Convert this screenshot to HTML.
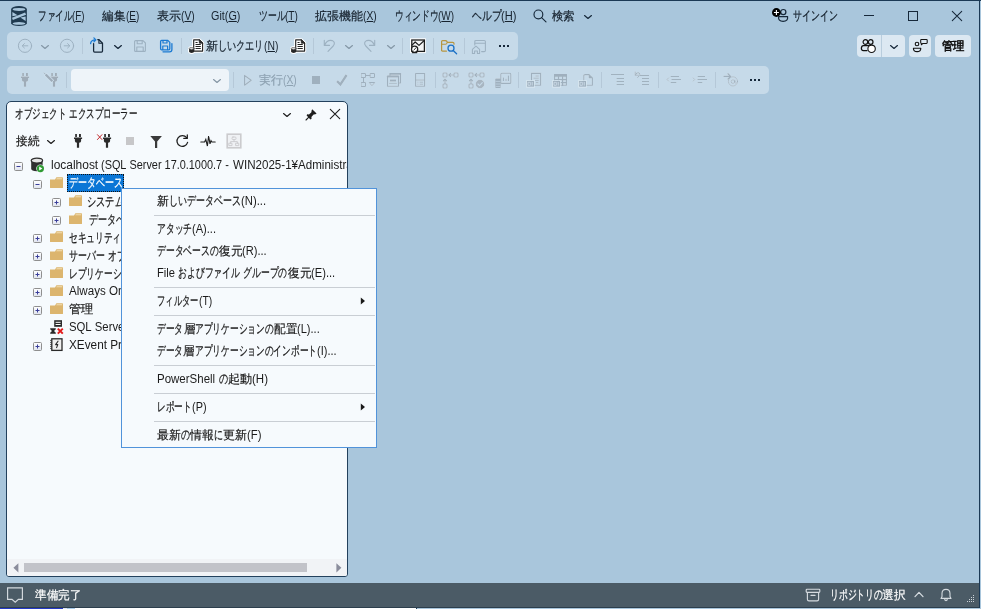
<!DOCTYPE html>
<html lang="ja"><head><meta charset="utf-8"><title>SSMS</title>
<style>
html,body{margin:0;padding:0;}
body{width:981px;height:609px;overflow:hidden;background:#A9C6DC;font-family:"Liberation Sans",sans-serif;font-size:12px;color:#1B1B1B;position:relative;}
#app{position:absolute;left:0;top:0;width:981px;height:609px;overflow:hidden;will-change:transform;}
#app div,#app svg,#app span.t{position:absolute;}
</style></head><body><div id="app">
<div style="left:7px;top:32px;width:511px;height:28px;background:#C6DAE9;border-radius:5px;"></div>
<div style="left:7px;top:66px;width:762px;height:28px;background:#C6DAE9;border-radius:5px;"></div>
<div style="left:857px;top:35px;width:48px;height:22px;background:#DCE8F2;border-radius:4px;"></div>
<div style="left:881px;top:35px;width:1px;height:22px;background:#B9CDDD;"></div>
<div style="left:909px;top:35px;width:22px;height:22px;background:#DCE8F2;border-radius:4px;"></div>
<div style="left:935px;top:35px;width:36px;height:22px;background:#DCE8F2;border-radius:4px;"></div>
<div style="left:71px;top:69px;width:158px;height:22px;background:#EEF4F9;border-radius:4px;"></div>
<div style="left:6px;top:101px;width:342px;height:476px;background:#F6FAFD;box-sizing:border-box;border:1px solid #23415D;border-radius:5px 5px 3px 3px;"></div>
<div style="left:7px;top:559px;width:340px;height:17px;background:#F1F3F6;border-radius:0 0 2px 2px;"></div>
<div style="left:24px;top:563px;width:283px;height:9px;background:#C2C3C9;"></div>
<div style="left:0px;top:583px;width:979px;height:24px;background:#4B5B66;"></div>
<div style="left:0px;top:607px;width:980px;height:1px;background:#2C3E4C;"></div>
<div style="left:0px;top:608px;width:63px;height:1px;background:#2438C8;"></div>
<div style="left:63px;top:608px;width:4px;height:1px;background:#DDE6F5;"></div>
<div style="left:68px;top:608px;width:7px;height:1px;background:#A8CBEA;"></div>
<div style="left:75px;top:608px;width:341px;height:1px;background:#FFFFFF;"></div>
<div style="left:416px;top:608px;width:1px;height:1px;background:#1B3955;"></div>
<div style="left:0px;top:0px;width:981px;height:1px;background:#1B3955;"></div>
<div style="left:979px;top:0px;width:1px;height:608px;background:#1B3955;"></div>
<svg style="left:11px;top:6px;" width="16" height="20" viewBox="0 0 16 20" fill="none" stroke-linecap="round" stroke-linejoin="round">
<path d="M0.15 3.2 A7.85 3.1 0 0 1 15.85 3.2 V17.2 A7.85 2.75 0 0 1 0.15 17.2 Z" fill="#1F3A50"/>
<ellipse cx="8" cy="3.45" rx="6.4" ry="1.55" fill="#A9C6DC"/>
<ellipse cx="8" cy="17.45" rx="6.4" ry="1.35" fill="#A9C6DC"/>
<path d="M1.4 5.9 V10.3 L6.6 9.3 Z" fill="#A9C6DC"/>
<path d="M14.6 10.5 V14.9 L9.4 11.5 Z" fill="#A9C6DC"/>
<path d="M1.4 12.9 L14.6 7.7" stroke="#A9C6DC" stroke-width="2.5" stroke-linecap="butt"/></svg>
<svg style="left:532px;top:8px;" width="16" height="16" viewBox="0 0 16 16" fill="none" stroke-linecap="round" stroke-linejoin="round"><circle cx="6.4" cy="6.4" r="4.4" stroke="#16283A" stroke-width="1.15"/><path d="M9.6 9.6 L14 13.8" stroke="#16283A" stroke-width="1.15"/></svg>
<svg style="left:583px;top:13.9px;" width="10" height="7.2" viewBox="0 0 10 7.2" fill="none" stroke-linecap="round" stroke-linejoin="round"><path d="M1.54 1.54 L5.00 4.46 L8.46 1.54" stroke="#16283A" stroke-width="1.2"/></svg>
<svg style="left:770px;top:6px;" width="22" height="18" viewBox="0 0 22 18" fill="none" stroke-linecap="round" stroke-linejoin="round">
<circle cx="13.3" cy="6.1" r="2.6" stroke="#16283A" stroke-width="1.2"/>
<path d="M8.6 10.6 H17.6 Q18.2 15.4 13.1 15.4 Q8 15.4 8.6 10.6 Z" stroke="#16283A" stroke-width="1.2"/>
<circle cx="6.4" cy="6.5" r="4.4" fill="#000"/>
<path d="M6.4 4 V9 M3.9 6.5 H8.9" stroke="#fff" stroke-width="1.1" stroke-linecap="butt"/></svg>
<div style="left:864px;top:15px;width:10px;height:1px;background:#16283A"></div>
<div style="left:908px;top:11px;width:10px;height:10px;box-sizing:border-box;border:1px solid #16283A"></div>
<svg style="left:951px;top:10px;" width="12" height="12" viewBox="0 0 12 12" fill="none" stroke-linecap="round" stroke-linejoin="round"><path d="M1.3 1.3 L10.7 10.7 M10.7 1.3 L1.3 10.7" stroke="#16283A" stroke-width="1.05"/></svg>
<svg style="left:17px;top:38px;" width="16" height="16" viewBox="0 0 16 16" fill="none" stroke-linecap="round" stroke-linejoin="round"><circle cx="8" cy="7.8" r="6.6" stroke="#9DB1C1" stroke-width="1"/><path d="M10.8 7.8 H5.4 M7.4 5.6 L5.2 7.8 L7.4 10" stroke="#9DB1C1" stroke-width="0.95"/></svg>
<svg style="left:40px;top:43.8px;" width="10" height="7.2" viewBox="0 0 10 7.2" fill="none" stroke-linecap="round" stroke-linejoin="round"><path d="M1.54 1.54 L5.00 4.46 L8.46 1.54" stroke="#8497A6" stroke-width="1.2"/></svg>
<svg style="left:59px;top:38px;" width="16" height="16" viewBox="0 0 16 16" fill="none" stroke-linecap="round" stroke-linejoin="round"><circle cx="8" cy="7.8" r="6.6" stroke="#9DB1C1" stroke-width="1"/><path d="M5.2 7.8 H10.6 M8.6 5.6 L10.8 7.8 L8.6 10" stroke="#9DB1C1" stroke-width="0.95"/></svg>
<div style="left:82px;top:38px;width:1px;height:16px;background:#B5C8D8"></div>
<svg style="left:89px;top:36px;" width="16" height="18" viewBox="0 0 16 18" fill="none" stroke-linecap="round" stroke-linejoin="round">
<path d="M4.6 7.5 V15 Q4.6 16 5.6 16 H12.5 Q13.5 16 13.5 15 V7.2 L10 3.7 H8.8" stroke="#16283A" stroke-width="1.25"/>
<path d="M9.9 3.9 V7.3 H13.3" stroke="#16283A" stroke-width="1.1"/>
<path d="M1.6 7.6 Q1.8 4 6.6 3.9 M4.9 1.9 L6.9 3.9 L4.9 5.9" stroke="#1C7CD5" stroke-width="1.3"/></svg>
<svg style="left:113px;top:43.6px;" width="10" height="7.2" viewBox="0 0 10 7.2" fill="none" stroke-linecap="round" stroke-linejoin="round"><path d="M1.58 1.58 L5.00 4.39 L8.41 1.58" stroke="#16283A" stroke-width="1.3"/></svg>
<svg style="left:133px;top:39px;" width="14" height="14" viewBox="0 0 14 14" fill="none" stroke-linecap="round" stroke-linejoin="round">
<path d="M1.6 2.6 Q1.6 1.6 2.6 1.6 H10 L12.4 4 V11.4 Q12.4 12.4 11.4 12.4 H2.6 Q1.6 12.4 1.6 11.4 Z" stroke="#9DB1C1" stroke-width="1.1"/>
<path d="M4.2 1.8 V4.8 H9.2 V1.8 M3.8 12.2 V8 H10.2 V12.2" stroke="#9DB1C1" stroke-width="1.1"/></svg>
<svg style="left:159px;top:39px;" width="15" height="14" viewBox="0 0 15 14" fill="none" stroke-linecap="round" stroke-linejoin="round">
<path d="M1.6 2.4 Q1.6 1.4 2.6 1.4 H8.8 L10.8 3.4 V9.8 Q10.8 10.8 9.8 10.8 H2.6 Q1.6 10.8 1.6 9.8 Z" stroke="#1B7AD2" stroke-width="1.3"/>
<path d="M4 1.6 V4 H8 V1.6 M3.8 10.6 V7 H8.6 V10.6" stroke="#1B7AD2" stroke-width="1.2"/>
<path d="M12.9 4.6 V10.6 Q12.9 12.8 10.6 12.8 H4" stroke="#1B7AD2" stroke-width="1.3"/></svg>
<div style="left:181px;top:38px;width:1px;height:16px;background:#B5C8D8"></div>
<svg style="left:188px;top:38px;" width="17" height="16" viewBox="0 0 17 16" fill="none" stroke-linecap="round" stroke-linejoin="round">
<path d="M5.7 1.9 H11.3 L14.6 5.2 V13.1 H5.7 Z" stroke="#fff" stroke-width="3.2" fill="#fff"/>
<ellipse cx="3.6" cy="12" rx="2.7" ry="3" fill="#fff" stroke="#fff" stroke-width="2"/>
<path d="M5.7 1.9 H11.3 L14.6 5.2 V13.1 H5.7 Z" stroke="#262626" stroke-width="1.15" fill="#fff"/>
<path d="M11.3 1.9 V5.2 H14.6 Z" fill="#262626" stroke="#262626" stroke-width="0.8"/>
<path d="M7.5 4.5 H9.6 M7.5 6.5 H12.8 M7.5 8.5 H12.8 M7.5 10.5 H12.8" stroke="#262626" stroke-width="1" stroke-linecap="butt"/>
<path d="M1.1 10.6 V13.6 Q1.1 14.9 3.6 14.9 Q6.1 14.9 6.1 13.6 V10.6 Z" fill="#262626"/>
<ellipse cx="3.6" cy="10.6" rx="2.5" ry="1.1" fill="#D8D8D8" stroke="#262626" stroke-width="0.5"/></svg>
<svg style="left:290px;top:38px;" width="17" height="16" viewBox="0 0 17 16" fill="none" stroke-linecap="round" stroke-linejoin="round">
<path d="M5.7 1.9 H11.3 L14.6 5.2 V13.1 H5.7 Z" stroke="#fff" stroke-width="3.2" fill="#fff"/>
<ellipse cx="3.6" cy="12" rx="2.7" ry="3" fill="#fff" stroke="#fff" stroke-width="2"/>
<path d="M5.7 1.9 H11.3 L14.6 5.2 V13.1 H5.7 Z" stroke="#262626" stroke-width="1.15" fill="#fff"/>
<path d="M11.3 1.9 V5.2 H14.6 Z" fill="#262626" stroke="#262626" stroke-width="0.8"/>
<path d="M7.5 4.5 H9.6 M7.5 6.5 H12.8 M7.5 8.5 H12.8 M7.5 10.5 H12.8" stroke="#262626" stroke-width="1" stroke-linecap="butt"/>
<path d="M1.1 10.6 V13.6 Q1.1 14.9 3.6 14.9 Q6.1 14.9 6.1 13.6 V10.6 Z" fill="#262626"/>
<ellipse cx="3.6" cy="10.6" rx="2.5" ry="1.1" fill="#D8D8D8" stroke="#262626" stroke-width="0.5"/></svg>
<div style="left:313px;top:38px;width:1px;height:16px;background:#B5C8D8"></div>
<svg style="left:322px;top:38px;" width="14" height="15" viewBox="0 0 14 15" fill="none" stroke-linecap="round" stroke-linejoin="round"><path d="M2.3 2.2 V7.4 H7.5 M2.6 7.1 Q5.4 1.2 10.2 2.6 Q14 4.4 11.2 8 L6 13.4" stroke="#9DB1C1" stroke-width="1.1"/></svg>
<svg style="left:344px;top:43.6px;" width="10" height="7.2" viewBox="0 0 10 7.2" fill="none" stroke-linecap="round" stroke-linejoin="round"><path d="M1.54 1.54 L5.00 4.46 L8.46 1.54" stroke="#8497A6" stroke-width="1.2"/></svg>
<svg style="left:363px;top:38px;" width="14" height="15" viewBox="0 0 14 15" fill="none" stroke-linecap="round" stroke-linejoin="round"><path d="M11.7 2.2 V7.4 H6.5 M11.4 7.1 Q8.6 1.2 3.8 2.6 Q0 4.4 2.8 8 L8 13.4" stroke="#9DB1C1" stroke-width="1.1"/></svg>
<svg style="left:386px;top:43.6px;" width="10" height="7.2" viewBox="0 0 10 7.2" fill="none" stroke-linecap="round" stroke-linejoin="round"><path d="M1.54 1.54 L5.00 4.46 L8.46 1.54" stroke="#8497A6" stroke-width="1.2"/></svg>
<div style="left:402px;top:38px;width:1px;height:16px;background:#B5C8D8"></div>
<svg style="left:410px;top:38px;" width="16" height="16" viewBox="0 0 16 16" fill="none" stroke-linecap="round" stroke-linejoin="round">
<rect x="0" y="0.3" width="15.8" height="14.8" fill="#fff"/>
<rect x="1.8" y="2" width="12.6" height="11.4" stroke="#1E1E1E" stroke-width="1.3" fill="#F4F4F4" stroke-linejoin="miter"/>
<path d="M2 7.2 L5.2 4 L9 7.4 L14 2.8" stroke="#1E1E1E" stroke-width="1.2"/>
<circle cx="4.6" cy="11.2" r="3.1" fill="#fff" stroke="#1E1E1E" stroke-width="1.3"/>
<path d="M3.9 11.9 L5.6 10.2" stroke="#1E1E1E" stroke-width="1"/>
<path d="M2.4 14.6 H6.8" stroke="#1E1E1E" stroke-width="1.2"/></svg>
<div style="left:433px;top:38px;width:1px;height:16px;background:#B5C8D8"></div>
<svg style="left:440px;top:39px;" width="18" height="16" viewBox="0 0 18 16" fill="none" stroke-linecap="round" stroke-linejoin="round">
<path d="M6.4 12.2 H2.6 Q1.6 12.2 1.6 11.2 V2.6 Q1.6 1.6 2.6 1.6 H5.4 Q6.4 1.6 7 2.6 L7.4 3.4 H12.8 Q14 3.4 14 4.6 V5.2" stroke="#B7953F" stroke-width="1.2"/>
<path d="M1.8 5.2 H5.6 Q6.6 5.2 7.2 3.6" stroke="#B7953F" stroke-width="1.1"/>
<circle cx="11" cy="9.2" r="3" stroke="#1B70C6" stroke-width="1.3"/>
<path d="M13.2 11.5 L16.6 14.7" stroke="#1B70C6" stroke-width="1.3"/></svg>
<div style="left:464px;top:38px;width:1px;height:16px;background:#B5C8D8"></div>
<svg style="left:471px;top:39px;" width="16" height="16" viewBox="0 0 16 16" fill="none" stroke-linecap="round" stroke-linejoin="round">
<path d="M3.8 6 V2.6 Q3.8 1.4 5 1.4 H13.2 Q14.4 1.4 14.4 2.6 V11.4 Q14.4 12.6 13.2 12.6 H10.6" stroke="#9DB1C1" stroke-width="1.05"/>
<path d="M4 4.2 H14.2" stroke="#9DB1C1" stroke-width="1.05"/>
<path d="M1.4 14.4 V10.4 L5 7.2 L8.6 10.4 V14.4 H6.4 V12 H3.6 V14.4 Z" stroke="#9DB1C1" stroke-width="1.05"/></svg>
<div style="left:499px;top:45px;width:2px;height:2px;background:#16283A"></div>
<div style="left:503px;top:45px;width:2px;height:2px;background:#16283A"></div>
<div style="left:507px;top:45px;width:2px;height:2px;background:#16283A"></div>
<svg style="left:860px;top:38px;" width="18" height="16" viewBox="0 0 18 16" fill="none" stroke-linecap="round" stroke-linejoin="round">
<circle cx="5.4" cy="4" r="2.3" stroke="#111" stroke-width="1.2"/>
<circle cx="10.7" cy="4" r="2.3" stroke="#111" stroke-width="1.2"/>
<path d="M7 12.6 H3.4 Q1.2 12.6 1.4 10 Q1.6 7.6 3.4 7.6 H8" stroke="#111" stroke-width="1.3"/>
<path d="M8.4 7.6 H12.8 Q14.2 7.6 14.6 9" stroke="#111" stroke-width="1.2"/>
<circle cx="11.6" cy="10.8" r="3.7" fill="#fff" stroke="#111" stroke-width="1.1"/></svg>
<svg style="left:889px;top:43.7px;" width="10" height="7.2" viewBox="0 0 10 7.2" fill="none" stroke-linecap="round" stroke-linejoin="round"><path d="M1.54 1.54 L5.00 4.46 L8.46 1.54" stroke="#16283A" stroke-width="1.2"/></svg>
<svg style="left:911px;top:37px;" width="18" height="17" viewBox="0 0 18 17" fill="none" stroke-linecap="round" stroke-linejoin="round">
<circle cx="6" cy="7" r="1.8" stroke="#111" stroke-width="1.1"/>
<path d="M2.4 11.2 H9.8 Q9.8 14.6 6.1 14.6 Q2.4 14.6 2.4 11.2 Z" stroke="#111" stroke-width="1.1"/>
<path d="M10.4 2.4 H15.4 Q16.2 2.4 16.2 3.2 V5.6 Q16.2 6.4 15.4 6.4 H11.8 L10.4 7.8 V6.4 Q9.7 6.3 9.7 5.6 V3.2 Q9.7 2.4 10.4 2.4 Z" stroke="#111" stroke-width="1.05"/></svg>
<svg style="filter:drop-shadow(0 0 0.7px rgba(236,244,250,0.95));left:21px;top:73px;" width="9" height="14" viewBox="0 0 9 14" fill="none" stroke-linecap="round" stroke-linejoin="round">
<path d="M1.2 0 H2.9 V2.9 H1.2 Z M5 0 H6.9 V2.9 H5 Z" fill="#9FACB8"/>
<path d="M0 3.6 H8.1 V5 H7.1 V7 Q7.1 8.7 5.1 8.7 V13.8 H2.9 V8.7 Q0.9 8.7 0.9 7 V5 H0 Z" fill="#9FACB8"/></svg>
<svg style="filter:drop-shadow(0 0 0.7px rgba(236,244,250,0.95));left:50px;top:73px;" width="9" height="14" viewBox="0 0 9 14" fill="none" stroke-linecap="round" stroke-linejoin="round">
<path d="M1.2 0 H2.9 V2.9 H1.2 Z M5 0 H6.9 V2.9 H5 Z" fill="#9FACB8"/>
<path d="M0 3.6 H8.1 V5 H7.1 V7 Q7.1 8.7 5.1 8.7 V13.8 H2.9 V8.7 Q0.9 8.7 0.9 7 V5 H0 Z" fill="#9FACB8"/></svg>
<svg style="filter:drop-shadow(0 0 0.7px rgba(236,244,250,0.95));left:43px;top:72px;" width="12" height="12" viewBox="0 0 12 12" fill="none" stroke-linecap="round" stroke-linejoin="round"><path d="M2.6 2.4 L9.6 9.4" stroke="#C6DAE9" stroke-width="3.6" stroke-linecap="butt"/><path d="M2.6 2.4 L9.4 9.2" stroke="#9FACB8" stroke-width="2.1" stroke-linecap="butt"/><path d="M1.2 1 L2.2 2" stroke="#9FACB8" stroke-width="1"/></svg>
<div style="left:66px;top:72px;width:1px;height:16px;background:#B5C8D8"></div>
<svg style="filter:drop-shadow(0 0 0.7px rgba(236,244,250,0.95));left:212px;top:77.7px;" width="10" height="7.2" viewBox="0 0 10 7.2" fill="none" stroke-linecap="round" stroke-linejoin="round"><path d="M1.54 1.54 L5.00 4.46 L8.46 1.54" stroke="#8596A4" stroke-width="1.2"/></svg>
<div style="left:233px;top:72px;width:1px;height:16px;background:#B5C8D8"></div>
<svg style="filter:drop-shadow(0 0 0.7px rgba(236,244,250,0.95));left:243px;top:74px;" width="10" height="13" viewBox="0 0 10 13" fill="none" stroke-linecap="round" stroke-linejoin="round"><path d="M1.6 1.4 L8.2 6.3 L1.6 11.2 Z" stroke="#9FB0BE" stroke-width="1.2"/></svg>
<div style="left:312px;top:76px;width:8px;height:8px;background:#9FB0BE"></div>
<svg style="filter:drop-shadow(0 0 0.7px rgba(236,244,250,0.95));left:335px;top:73px;" width="14" height="14" viewBox="0 0 14 14" fill="none" stroke-linecap="round" stroke-linejoin="round"><path d="M2 8.2 L5.4 11.4 L11.6 2" stroke="#9FB0BE" stroke-width="2.3" stroke-linecap="butt" stroke-linejoin="miter"/></svg>
<svg style="filter:drop-shadow(0 0 0.7px rgba(236,244,250,0.95));left:360px;top:72px;" width="16" height="16" viewBox="0 0 16 16" fill="none" stroke-linecap="round" stroke-linejoin="round">
<rect x="1.5" y="1.5" width="4" height="4" stroke="#9FB0BE"/><rect x="10.5" y="1.5" width="4" height="4" stroke="#9FB0BE"/>
<rect x="1.5" y="10.5" width="4" height="4" stroke="#9FB0BE"/>
<path d="M6 3.5 H10 M3.5 6 V10" stroke="#9FB0BE"/><path d="M9.6 10.5 H14.8 L12.2 13.4 Z" stroke="#9FB0BE"/></svg>
<svg style="filter:drop-shadow(0 0 0.7px rgba(236,244,250,0.95));left:386px;top:72px;" width="16" height="16" viewBox="0 0 16 16" fill="none" stroke-linecap="round" stroke-linejoin="round">
<path d="M4 3.5 V1.5 H14.5 V11 H12.5" stroke="#9FB0BE" stroke-width="1.1"/><path d="M4 2 H14.5" stroke="#9FB0BE" stroke-width="1.6"/>
<rect x="1.5" y="4" width="11" height="10.2" stroke="#9FB0BE" stroke-width="1.1"/><path d="M1.5 4.6 H12.5" stroke="#9FB0BE" stroke-width="1.6"/>
<rect x="4" y="7.5" width="6" height="2" fill="#9FB0BE"/><path d="M3.5 11.4 H10.5" stroke="#9FB0BE" stroke-width="0.8"/></svg>
<svg style="filter:drop-shadow(0 0 0.7px rgba(236,244,250,0.95));left:414px;top:72px;" width="12" height="16" viewBox="0 0 12 16" fill="none" stroke-linecap="round" stroke-linejoin="round">
<rect x="1.6" y="1.5" width="9" height="12.8" stroke="#9FB0BE" stroke-width="1.1"/><path d="M1.6 8 H10.6" stroke="#9FB0BE" stroke-width="1"/>
<path d="M3.4 10.2 H4.4 M5.6 10.2 H9 M3.4 12.2 H4.4 M5.6 12.2 H9" stroke="#9FB0BE" stroke-width="0.9" stroke-linecap="butt"/></svg>
<div style="left:435px;top:72px;width:1px;height:16px;background:#B5C8D8"></div>
<svg style="filter:drop-shadow(0 0 0.7px rgba(236,244,250,0.95));left:442px;top:72px;" width="17" height="17" viewBox="0 0 17 17" fill="none" stroke-linecap="round" stroke-linejoin="round">
<rect x="1" y="1" width="4" height="4" rx="0.8" stroke="#9FB0BE" stroke-width="1.1"/><rect x="12" y="1" width="4" height="4" rx="0.8" stroke="#9FB0BE" stroke-width="1.1"/>
<rect x="1" y="12" width="4" height="4" rx="0.8" stroke="#9FB0BE" stroke-width="1.1"/>
<path d="M11.4 3 H7 M8.6 1.4 L6.8 3 L8.6 4.6 M3 11.6 V7.4 M1.4 8.8 L3 7 L4.6 8.8" stroke="#9FB0BE" stroke-width="1.1"/></svg>
<svg style="filter:drop-shadow(0 0 0.7px rgba(236,244,250,0.95));left:468px;top:72px;" width="17" height="17" viewBox="0 0 17 17" fill="none" stroke-linecap="round" stroke-linejoin="round">
<rect x="1" y="1" width="4" height="4" rx="0.8" stroke="#9FB0BE" stroke-width="1.1"/><rect x="12" y="1" width="4" height="4" rx="0.8" stroke="#9FB0BE" stroke-width="1.1"/>
<rect x="1" y="12" width="4" height="4" rx="0.8" stroke="#9FB0BE" stroke-width="1.1"/>
<path d="M11.4 3 H7 M8.6 1.4 L6.8 3 L8.6 4.6 M3 11.6 V7.4 M1.4 8.8 L3 7 L4.6 8.8" stroke="#9FB0BE" stroke-width="1.1"/><circle cx="12" cy="12" r="4.3" fill="#A8B6C2"/><path d="M9.9 12 L11.5 13.6 L14.3 10.6" stroke="#C6DAE9" stroke-width="1.1"/></svg>
<svg style="filter:drop-shadow(0 0 0.7px rgba(236,244,250,0.95));left:494px;top:72px;" width="18" height="17" viewBox="0 0 18 17" fill="none" stroke-linecap="round" stroke-linejoin="round">
<rect x="6.8" y="1.2" width="10" height="10.2" rx="1" stroke="#9FB0BE" stroke-width="1.1"/>
<path d="M9.4 9 V5.6 M12 9 V6.8 M14.4 9 V3.6" stroke="#9FB0BE" stroke-width="1.1" stroke-linecap="butt"/>
<rect x="1.2" y="6.6" width="5.6" height="9.4" rx="0.8" fill="#9FB0BE"/><path d="M2 9.4 H6 M2 12 H6 M2 14.4 H6" stroke="#C6DAE9" stroke-width="0.7"/></svg>
<div style="left:518px;top:72px;width:1px;height:16px;background:#B5C8D8"></div>
<svg style="filter:drop-shadow(0 0 0.7px rgba(236,244,250,0.95));left:526px;top:72px;" width="16" height="16" viewBox="0 0 16 16" fill="none" stroke-linecap="round" stroke-linejoin="round">
<path d="M5.5 8 V1.4 H14.6 V13.2 H8.6" stroke="#9FB0BE" stroke-width="1.1" stroke-linejoin="miter"/>
<path d="M9.4 4 H12.8 M7.4 6.2 H12.8 M9 8.4 H12.8 M9.8 10.6 H12.4" stroke="#9FB0BE" stroke-width="0.9" stroke-linecap="butt"/><rect x="0.30000000000000004" y="8.2" width="8.5" height="7.2" fill="#D0E0EC"/><rect x="1.1" y="9" width="6.9" height="5.6" fill="#9FB0BE"/><rect x="2.45" y="10.3" width="1.9" height="3" stroke="#D0E0EC" stroke-width="0.8"/><path d="M6.199999999999999 10 V13.6" stroke="#D0E0EC" stroke-width="0.9" stroke-linecap="butt"/></svg>
<svg style="filter:drop-shadow(0 0 0.7px rgba(236,244,250,0.95));left:552px;top:72px;" width="16" height="16" viewBox="0 0 16 16" fill="none" stroke-linecap="round" stroke-linejoin="round">
<rect x="2.6" y="2.6" width="11.8" height="10.6" stroke="#9FB0BE" stroke-width="1.1"/><rect x="2.1" y="2.1" width="12.8" height="2.7" fill="#9FB0BE"/>
<path d="M2.6 7.7 H14.4 M2.6 10.6 H14.4 M6.5 4.6 V13.4 M10.6 4.6 V13.4" stroke="#9FB0BE" stroke-width="1.2"/><rect x="0.30000000000000004" y="8.2" width="8.5" height="7.2" fill="#D0E0EC"/><rect x="1.1" y="9" width="6.9" height="5.6" fill="#9FB0BE"/><rect x="2.45" y="10.3" width="1.9" height="3" stroke="#D0E0EC" stroke-width="0.8"/><path d="M6.199999999999999 10 V13.6" stroke="#D0E0EC" stroke-width="0.9" stroke-linecap="butt"/></svg>
<svg style="filter:drop-shadow(0 0 0.7px rgba(236,244,250,0.95));left:578px;top:72px;" width="16" height="16" viewBox="0 0 16 16" fill="none" stroke-linecap="round" stroke-linejoin="round">
<path d="M5.8 8.6 V3.8 Q5.8 2.6 7 2.6 H11 L14.4 6 V13.3 H8.6" stroke="#9FB0BE" stroke-width="1.1"/><path d="M11 2.8 V6 H14.2" fill="#9FB0BE" stroke="#9FB0BE" stroke-width="0.6"/><rect x="0.30000000000000004" y="8.2" width="8.5" height="7.2" fill="#D0E0EC"/><rect x="1.1" y="9" width="6.9" height="5.6" fill="#9FB0BE"/><rect x="2.45" y="10.3" width="1.9" height="3" stroke="#D0E0EC" stroke-width="0.8"/><path d="M6.199999999999999 10 V13.6" stroke="#D0E0EC" stroke-width="0.9" stroke-linecap="butt"/></svg>
<div style="left:601px;top:72px;width:1px;height:16px;background:#B5C8D8"></div>
<svg style="filter:drop-shadow(0 0 0.7px rgba(236,244,250,0.95));left:610px;top:73px;" width="15" height="14" viewBox="0 0 15 14" fill="none" stroke-linecap="round" stroke-linejoin="round"><path d="M1 1.5 H14 M6.5 5.5 H14 M6.5 8.5 H14 M6.5 11.5 H14" stroke="#A1B2BF" stroke-width="1" stroke-linecap="butt"/></svg>
<svg style="filter:drop-shadow(0 0 0.7px rgba(236,244,250,0.95));left:634px;top:71px;" width="16" height="16" viewBox="0 0 16 16" fill="none" stroke-linecap="round" stroke-linejoin="round"><path d="M6 4.5 H15 M8 7.5 H15 M8 10.5 H15 M8 13.5 H15" stroke="#A1B2BF" stroke-width="1" stroke-linecap="butt"/><path d="M1.2 1 V4.2 H4.4 M1.4 4 Q2.6 0.8 5 1.8 Q6.8 3 5 5 L3.6 6.6" stroke="#9FB0BE" stroke-width="0.95"/></svg>
<div style="left:658px;top:72px;width:1px;height:16px;background:#B5C8D8"></div>
<svg style="filter:drop-shadow(0 0 0.7px rgba(236,244,250,0.95));left:666px;top:73px;" width="16" height="14" viewBox="0 0 16 14" fill="none" stroke-linecap="round" stroke-linejoin="round"><path d="M4.6 3.5 H13 M5.4 6.5 H15 M4.6 9.5 H10.4" stroke="#A1B2BF" stroke-width="1" stroke-linecap="butt"/><path d="M2.6 4.9 L1 6.5 L2.6 8.1" stroke="#A1B2BF" stroke-width="0.9"/></svg>
<svg style="filter:drop-shadow(0 0 0.7px rgba(236,244,250,0.95));left:692px;top:73px;" width="16" height="14" viewBox="0 0 16 14" fill="none" stroke-linecap="round" stroke-linejoin="round"><path d="M5.6 3.5 H13 M5.4 6.5 H15 M5.6 9.5 H10.4" stroke="#A1B2BF" stroke-width="1" stroke-linecap="butt"/><path d="M1.2 4.9 L2.8 6.5 L1.2 8.1" stroke="#A1B2BF" stroke-width="0.9"/></svg>
<div style="left:715px;top:72px;width:1px;height:16px;background:#B5C8D8"></div>
<svg style="filter:drop-shadow(0 0 0.7px rgba(236,244,250,0.95));left:723px;top:72px;" width="16" height="16" viewBox="0 0 16 16" fill="none" stroke-linecap="round" stroke-linejoin="round">
<path d="M1 4.4 H7.4 M5 1.8 L7.6 4.4 L5 7" stroke="#9FB0BE" stroke-width="1.3"/>
<circle cx="10" cy="9.4" r="4.6" stroke="#9FB0BE" stroke-width="0.8"/><circle cx="10" cy="9.6" r="1.8" stroke="#9FB0BE" stroke-width="0.8"/><path d="M11.9 8 V10.6 Q12.4 11.6 13.2 10.8" stroke="#9FB0BE" stroke-width="0.8"/></svg>
<div style="left:750px;top:79px;width:2px;height:2px;background:#16283A"></div>
<div style="left:754px;top:79px;width:2px;height:2px;background:#16283A"></div>
<div style="left:758px;top:79px;width:2px;height:2px;background:#16283A"></div>
<svg style="left:282px;top:111.6px;" width="10" height="7.2" viewBox="0 0 10 7.2" fill="none" stroke-linecap="round" stroke-linejoin="round"><path d="M1.54 1.54 L5.00 4.46 L8.46 1.54" stroke="#1E1E1E" stroke-width="1.2"/></svg>
<svg style="left:305px;top:108px;" width="13" height="13" viewBox="0 0 13 13" fill="none" stroke-linecap="round" stroke-linejoin="round">
<path d="M7.2 1.2 L11.6 5.6 L10.4 6.2 L8.6 6.4 L6.4 9 L6.6 10.8 L5.4 11.4 L1.6 7.4 L2.2 6.2 L4 6.4 L6.4 4.2 L6.6 2.4 Z" fill="#1E1E1E" transform="rotate(0 6.5 6.5)"/>
<path d="M3.6 9.4 L1 12" stroke="#1E1E1E" stroke-width="1.1"/></svg>
<svg style="left:329px;top:108px;" width="12" height="12" viewBox="0 0 12 12" fill="none" stroke-linecap="round" stroke-linejoin="round"><path d="M1.3 1.3 L10.7 10.7 M10.7 1.3 L1.3 10.7" stroke="#1E1E1E" stroke-width="1.1"/></svg>
<svg style="left:46.2px;top:138.6px;" width="10" height="7.2" viewBox="0 0 10 7.2" fill="none" stroke-linecap="round" stroke-linejoin="round"><path d="M1.54 1.54 L5.00 4.46 L8.46 1.54" stroke="#1E1E1E" stroke-width="1.2"/></svg>
<svg style="left:74px;top:134px;" width="9" height="14" viewBox="0 0 9 14" fill="none" stroke-linecap="round" stroke-linejoin="round">
<path d="M1.2 0 H2.9 V2.9 H1.2 Z M5 0 H6.9 V2.9 H5 Z" fill="#2B2B2B"/>
<path d="M0 3.6 H8.1 V5 H7.1 V7 Q7.1 8.7 5.1 8.7 V13.8 H2.9 V8.7 Q0.9 8.7 0.9 7 V5 H0 Z" fill="#2B2B2B"/></svg>
<svg style="left:103px;top:134px;" width="9" height="14" viewBox="0 0 9 14" fill="none" stroke-linecap="round" stroke-linejoin="round">
<path d="M1.2 0 H2.9 V2.9 H1.2 Z M5 0 H6.9 V2.9 H5 Z" fill="#2B2B2B"/>
<path d="M0 3.6 H8.1 V5 H7.1 V7 Q7.1 8.7 5.1 8.7 V13.8 H2.9 V8.7 Q0.9 8.7 0.9 7 V5 H0 Z" fill="#2B2B2B"/></svg>
<svg style="left:96px;top:133px;" width="8" height="8" viewBox="0 0 8 8" fill="none" stroke-linecap="round" stroke-linejoin="round"><path d="M1.2 1.4 L6.2 6.8 M6.2 1.4 L1.2 6.8" stroke="#C22A2E" stroke-width="1" stroke-linecap="butt"/></svg>
<div style="left:126px;top:137px;width:8px;height:8px;background:#C7C7C9"></div>
<svg style="left:150px;top:135px;" width="13" height="14" viewBox="0 0 13 14" fill="none" stroke-linecap="round" stroke-linejoin="round"><path d="M0.3 1 H11.9 L7.2 6.6 V13 H5 V6.6 Z" fill="#3A3A3A"/></svg>
<svg style="left:175px;top:134px;" width="15" height="15" viewBox="0 0 15 15" fill="none" stroke-linecap="round" stroke-linejoin="round"><path d="M11.6 3.6 A5.4 5.4 0 1 0 12.6 8.4" stroke="#1E1E1E" stroke-width="1.25"/><path d="M12.3 0.9 V4.4 H8.8" stroke="#1E1E1E" stroke-width="1.25"/></svg>
<svg style="left:200px;top:134px;" width="16" height="14" viewBox="0 0 16 14" fill="none" stroke-linecap="round" stroke-linejoin="round"><path d="M0.8 8 H4.6 L5.8 5.4 L7.4 12 L8.6 2 L10 9.8 L11 6.6 L11.8 8 H15.2" stroke="#1E1E1E" stroke-width="1.1" stroke-linejoin="miter"/></svg>
<svg style="left:226px;top:133px;" width="16" height="16" viewBox="0 0 16 16" fill="none" stroke-linecap="round" stroke-linejoin="round">
<rect x="1.2" y="1.2" width="13.6" height="13.6" stroke="#CBCBCE" stroke-width="1.6" fill="#EFF1F4" stroke-linejoin="miter"/>
<rect x="6" y="4" width="4" height="2.6" rx="1" stroke="#CBCBCE" stroke-width="0.9"/>
<path d="M8 6.6 V8.6 M4.6 10.4 V8.6 H11.4 V10.4" stroke="#CBCBCE" stroke-width="0.9"/>
<rect x="3.2" y="10.2" width="2.8" height="2.4" stroke="#CBCBCE" stroke-width="0.9"/><rect x="10" y="10.2" width="2.8" height="2.4" stroke="#CBCBCE" stroke-width="0.9"/></svg>
<svg style="left:13px;top:563px;" width="6" height="10" viewBox="0 0 6 10" fill="none" stroke-linecap="round" stroke-linejoin="round"><path d="M5.4 0.2 V9.4 L0.4 4.8 Z" fill="#8B8D9C"/></svg>
<svg style="left:336px;top:563px;" width="6" height="10" viewBox="0 0 6 10" fill="none" stroke-linecap="round" stroke-linejoin="round"><path d="M0.4 0.2 V9.4 L5.4 4.8 Z" fill="#8B8D9C"/></svg>
<svg style="left:6px;top:586px;" width="18" height="18" viewBox="0 0 18 18" fill="none" stroke-linecap="round" stroke-linejoin="round"><path d="M1.6 1.8 H16.4 V13.4 H12.4 L9.2 16.2 L6 13.4 H1.6 Z" stroke="#D5DBE0" stroke-width="1.15" stroke-linejoin="miter"/></svg>
<svg style="left:805px;top:588px;" width="16" height="14" viewBox="0 0 16 14" fill="none" stroke-linecap="round" stroke-linejoin="round">
<rect x="1.2" y="1.2" width="13.6" height="3.2" rx="0.8" stroke="#D5DBE0" stroke-width="1.15"/>
<path d="M2.4 4.6 V11.2 Q2.4 12.8 4 12.8 H12 Q13.6 12.8 13.6 11.2 V4.6" stroke="#D5DBE0" stroke-width="1.15"/>
<path d="M6 7.4 H10" stroke="#D5DBE0" stroke-width="1.15"/></svg>
<svg style="left:914px;top:591px;" width="10" height="7" viewBox="0 0 10 7" fill="none" stroke-linecap="round" stroke-linejoin="round"><path d="M1 5.6 L5 1.4 L9 5.6" stroke="#D5DBE0" stroke-width="1.3"/></svg>
<svg style="left:939px;top:588px;" width="14" height="14" viewBox="0 0 14 14" fill="none" stroke-linecap="round" stroke-linejoin="round">
<path d="M2 10.4 H12 L11 8.6 V5.4 Q11 1.4 7 1.4 Q3 1.4 3 5.4 V8.6 Z" stroke="#D5DBE0" stroke-width="1.1"/>
<path d="M5.6 10.6 Q5.6 12.6 7 12.6 Q8.4 12.6 8.4 10.6" stroke="#D5DBE0" stroke-width="1.1"/></svg>
<div style="left:973px;top:601px;width:1px;height:1px;background:#CDD3D8"></div><div style="left:971px;top:601px;width:1px;height:1px;background:#CDD3D8"></div><div style="left:969px;top:601px;width:1px;height:1px;background:#CDD3D8"></div><div style="left:967px;top:601px;width:1px;height:1px;background:#CDD3D8"></div><div style="left:973px;top:599px;width:1px;height:1px;background:#CDD3D8"></div><div style="left:971px;top:599px;width:1px;height:1px;background:#CDD3D8"></div><div style="left:969px;top:599px;width:1px;height:1px;background:#CDD3D8"></div><div style="left:973px;top:597px;width:1px;height:1px;background:#CDD3D8"></div><div style="left:971px;top:597px;width:1px;height:1px;background:#CDD3D8"></div><div style="left:973px;top:595px;width:1px;height:1px;background:#CDD3D8"></div>
<span class="t" style="left:38.2px;top:8.0px;height:16px;line-height:16px;white-space:nowrap;font-size:12px;color:#16222E;"><span style="display:inline-block;font-size:13.08px;-webkit-text-stroke:0.25px;width:34.30px;transform:scaleX(0.660);transform-origin:0 0">ファイル</span><span style="display:inline-block;width:12.50px;transform:scaleX(0.815);transform-origin:0 0">(<u>F</u>)</span></span>
<span class="t" style="left:102.4px;top:8.0px;height:16px;line-height:16px;white-space:nowrap;font-size:12px;color:#16222E;"><span style="display:inline-block;-webkit-text-stroke:0.2px;width:23.22px;transform:scaleX(0.967);transform-origin:0 0">編集</span><span style="display:inline-block;width:13.28px;transform:scaleX(0.829);transform-origin:0 0">(<u>E</u>)</span></span>
<span class="t" style="left:156.6px;top:8.0px;height:16px;line-height:16px;white-space:nowrap;font-size:12px;color:#16222E;"><span style="display:inline-block;-webkit-text-stroke:0.2px;width:23.98px;transform:scaleX(0.999);transform-origin:0 0">表示</span><span style="display:inline-block;width:13.72px;transform:scaleX(0.857);transform-origin:0 0">(<u>V</u>)</span></span>
<span class="t" style="left:211.4px;top:8.0px;height:16px;line-height:16px;white-space:nowrap;font-size:12px;color:#16222E;"><span style="display:inline-block;width:29.40px;transform:scaleX(0.899);transform-origin:0 0">Git(<u>G</u>)</span></span>
<span class="t" style="left:258.5px;top:8.0px;height:16px;line-height:16px;white-space:nowrap;font-size:12px;color:#16222E;"><span style="display:inline-block;font-size:13.08px;-webkit-text-stroke:0.25px;width:26.51px;transform:scaleX(0.680);transform-origin:0 0">ツール</span><span style="display:inline-block;width:12.89px;transform:scaleX(0.840);transform-origin:0 0">(<u>T</u>)</span></span>
<span class="t" style="left:315.4px;top:8.0px;height:16px;line-height:16px;white-space:nowrap;font-size:12px;color:#16222E;"><span style="display:inline-block;-webkit-text-stroke:0.2px;width:48.06px;transform:scaleX(1.001);transform-origin:0 0">拡張機能</span><span style="display:inline-block;width:13.74px;transform:scaleX(0.858);transform-origin:0 0">(<u>X</u>)</span></span>
<span class="t" style="left:394.5px;top:8.0px;height:16px;line-height:16px;white-space:nowrap;font-size:12px;color:#16222E;"><span style="display:inline-block;font-size:13.08px;-webkit-text-stroke:0.25px;width:43.66px;transform:scaleX(0.672);transform-origin:0 0">ウィンドウ</span><span style="display:inline-block;width:16.04px;transform:scaleX(0.830);transform-origin:0 0">(<u>W</u>)</span></span>
<span class="t" style="left:471.5px;top:8.0px;height:16px;line-height:16px;white-space:nowrap;font-size:12px;color:#16222E;"><span style="display:inline-block;font-size:13.08px;-webkit-text-stroke:0.25px;width:29.25px;transform:scaleX(0.750);transform-origin:0 0">ヘルプ</span><span style="display:inline-block;width:15.45px;transform:scaleX(0.927);transform-origin:0 0">(<u>H</u>)</span></span>
<span class="t" style="left:552.3px;top:8.0px;height:16px;line-height:16px;white-space:nowrap;font-size:12px;color:#16222E;"><span style="display:inline-block;-webkit-text-stroke:0.2px;width:22.70px;transform:scaleX(0.946);transform-origin:0 0">検索</span></span>
<span class="t" style="left:792.9px;top:8.0px;height:16px;line-height:16px;white-space:nowrap;font-size:12px;color:#16222E;"><span style="display:inline-block;font-size:13.08px;-webkit-text-stroke:0.25px;width:44.60px;transform:scaleX(0.686);transform-origin:0 0">サインイン</span></span>
<span class="t" style="left:206.2px;top:38.0px;height:16px;line-height:16px;white-space:nowrap;font-size:12px;color:#16222E;"><span style="display:inline-block;-webkit-text-stroke:0.2px;width:12.10px;transform:scaleX(1.009);transform-origin:0 0">新</span><span style="display:inline-block;font-size:13.08px;-webkit-text-stroke:0.25px;width:45.49px;transform:scaleX(0.700);transform-origin:0 0">しいクエリ</span><span style="display:inline-block;width:14.41px;transform:scaleX(0.864);transform-origin:0 0">(<u>N</u>)</span></span>
<span class="t" style="left:941.6px;top:38.0px;height:16px;line-height:16px;white-space:nowrap;font-size:12px;color:#0C0C0C;"><span style="display:inline-block;-webkit-text-stroke:0.55px;width:22.80px;transform:scaleX(0.950);transform-origin:0 0">管理</span></span>
<span class="t" style="left:258.7px;top:72.0px;height:16px;line-height:16px;white-space:nowrap;font-size:12px;color:#8EA2B2;"><span style="display:inline-block;-webkit-text-stroke:0.2px;width:24.05px;transform:scaleX(1.002);transform-origin:0 0">実行</span><span style="display:inline-block;width:13.75px;transform:scaleX(0.859);transform-origin:0 0">(<u>X</u>)</span></span>
<span class="t" style="left:15.4px;top:106.0px;height:16px;line-height:16px;white-space:nowrap;font-size:12px;"><span style="display:inline-block;font-size:13.08px;-webkit-text-stroke:0.25px;width:51.05px;transform:scaleX(0.654);transform-origin:0 0">オブジェクト</span><span style="display:inline-block;width:2.99px;transform:scaleX(0.895);transform-origin:0 0">&nbsp;</span><span style="display:inline-block;font-size:13.08px;-webkit-text-stroke:0.25px;width:68.06px;transform:scaleX(0.654);transform-origin:0 0">エクスプローラー</span></span>
<span class="t" style="left:15.5px;top:133.0px;height:16px;line-height:16px;white-space:nowrap;font-size:12px;"><span style="display:inline-block;-webkit-text-stroke:0.2px;width:23.30px;transform:scaleX(0.971);transform-origin:0 0">接続</span></span>
<span class="t" style="left:34.7px;top:586.5px;height:16px;line-height:16px;white-space:nowrap;font-size:12px;color:#FFFFFF;"><span style="display:inline-block;-webkit-text-stroke:0.2px;width:46.20px;transform:scaleX(0.963);transform-origin:0 0">準備完了</span></span>
<span class="t" style="left:829.5px;top:586.5px;height:16px;line-height:16px;white-space:nowrap;font-size:12px;color:#FFFFFF;"><span style="display:inline-block;font-size:13.08px;-webkit-text-stroke:0.25px;width:52.86px;transform:scaleX(0.678);transform-origin:0 0">リポジトリの</span><span style="display:inline-block;-webkit-text-stroke:0.2px;width:23.44px;transform:scaleX(0.977);transform-origin:0 0">選択</span></span>
<svg style="left:14px;top:162px" width="9" height="9" viewBox="0 0 9 9" fill="none"><defs><linearGradient id="eg14_162" x1="0" y1="0" x2="0" y2="1"><stop offset="0" stop-color="#FFFFFF"/><stop offset="1" stop-color="#DFE3EE"/></linearGradient></defs><rect x="0.5" y="0.5" width="8" height="8" rx="1" fill="url(#eg14_162)" stroke="#8F8F8F"/><path d="M2.5 4.5 H6.5" stroke="#3A3E9A" stroke-width="1" stroke-linecap="butt"/></svg>
<svg style="left:30px;top:157px;" width="15" height="16" viewBox="0 0 15 16" fill="none" stroke-linecap="round" stroke-linejoin="round">
<path d="M1.2 3.4 V11.8 Q1.2 14.2 6.9 14.2 Q12.6 14.2 12.6 11.8 V3.4 Z" fill="#2F2F2F"/>
<ellipse cx="6.9" cy="3.6" rx="5.7" ry="2.5" fill="#E4E4E4" stroke="#2F2F2F" stroke-width="1.2"/>
<circle cx="10.4" cy="11.6" r="4.2" fill="#F5F9FD"/>
<circle cx="10.4" cy="11.6" r="3.6" fill="#2F9B33"/>
<path d="M9.2 9.6 L12.4 11.6 L9.2 13.6 Z" fill="#fff"/></svg>
<svg style="left:33px;top:180px" width="9" height="9" viewBox="0 0 9 9" fill="none"><defs><linearGradient id="eg33_180" x1="0" y1="0" x2="0" y2="1"><stop offset="0" stop-color="#FFFFFF"/><stop offset="1" stop-color="#DFE3EE"/></linearGradient></defs><rect x="0.5" y="0.5" width="8" height="8" rx="1" fill="url(#eg33_180)" stroke="#8F8F8F"/><path d="M2.5 4.5 H6.5" stroke="#3A3E9A" stroke-width="1" stroke-linecap="butt"/></svg>
<svg style="left:50px;top:177px;" width="13" height="11" viewBox="0 0 13 11" fill="none" stroke-linecap="round" stroke-linejoin="round">
<path d="M0 2.4 H5 L6.4 0.3 H12.4 Q13 0.3 13 0.9 V10.4 Q13 11 12.4 11 H0.6 Q0 11 0 10.4 Z" fill="#DCB56E"/>
<path d="M6.8 1.3 H12.2 V2.2 H6.2 Z" fill="#F3DFB3"/></svg>
<svg style="left:52px;top:198px" width="9" height="9" viewBox="0 0 9 9" fill="none"><defs><linearGradient id="eg52_198" x1="0" y1="0" x2="0" y2="1"><stop offset="0" stop-color="#FFFFFF"/><stop offset="1" stop-color="#DFE3EE"/></linearGradient></defs><rect x="0.5" y="0.5" width="8" height="8" rx="1" fill="url(#eg52_198)" stroke="#8F8F8F"/><path d="M2.5 4.5 H6.5" stroke="#3A3E9A" stroke-width="1" stroke-linecap="butt"/><path d="M4.5 2.5 V6.5" stroke="#3A3E9A" stroke-width="1" stroke-linecap="butt"/></svg>
<svg style="left:69px;top:195px;" width="13" height="11" viewBox="0 0 13 11" fill="none" stroke-linecap="round" stroke-linejoin="round">
<path d="M0 2.4 H5 L6.4 0.3 H12.4 Q13 0.3 13 0.9 V10.4 Q13 11 12.4 11 H0.6 Q0 11 0 10.4 Z" fill="#DCB56E"/>
<path d="M6.8 1.3 H12.2 V2.2 H6.2 Z" fill="#F3DFB3"/></svg>
<svg style="left:52px;top:216px" width="9" height="9" viewBox="0 0 9 9" fill="none"><defs><linearGradient id="eg52_216" x1="0" y1="0" x2="0" y2="1"><stop offset="0" stop-color="#FFFFFF"/><stop offset="1" stop-color="#DFE3EE"/></linearGradient></defs><rect x="0.5" y="0.5" width="8" height="8" rx="1" fill="url(#eg52_216)" stroke="#8F8F8F"/><path d="M2.5 4.5 H6.5" stroke="#3A3E9A" stroke-width="1" stroke-linecap="butt"/><path d="M4.5 2.5 V6.5" stroke="#3A3E9A" stroke-width="1" stroke-linecap="butt"/></svg>
<svg style="left:69px;top:213px;" width="13" height="11" viewBox="0 0 13 11" fill="none" stroke-linecap="round" stroke-linejoin="round">
<path d="M0 2.4 H5 L6.4 0.3 H12.4 Q13 0.3 13 0.9 V10.4 Q13 11 12.4 11 H0.6 Q0 11 0 10.4 Z" fill="#DCB56E"/>
<path d="M6.8 1.3 H12.2 V2.2 H6.2 Z" fill="#F3DFB3"/></svg>
<svg style="left:33px;top:234px" width="9" height="9" viewBox="0 0 9 9" fill="none"><defs><linearGradient id="eg33_234" x1="0" y1="0" x2="0" y2="1"><stop offset="0" stop-color="#FFFFFF"/><stop offset="1" stop-color="#DFE3EE"/></linearGradient></defs><rect x="0.5" y="0.5" width="8" height="8" rx="1" fill="url(#eg33_234)" stroke="#8F8F8F"/><path d="M2.5 4.5 H6.5" stroke="#3A3E9A" stroke-width="1" stroke-linecap="butt"/><path d="M4.5 2.5 V6.5" stroke="#3A3E9A" stroke-width="1" stroke-linecap="butt"/></svg>
<svg style="left:50px;top:231px;" width="13" height="11" viewBox="0 0 13 11" fill="none" stroke-linecap="round" stroke-linejoin="round">
<path d="M0 2.4 H5 L6.4 0.3 H12.4 Q13 0.3 13 0.9 V10.4 Q13 11 12.4 11 H0.6 Q0 11 0 10.4 Z" fill="#DCB56E"/>
<path d="M6.8 1.3 H12.2 V2.2 H6.2 Z" fill="#F3DFB3"/></svg>
<svg style="left:33px;top:252px" width="9" height="9" viewBox="0 0 9 9" fill="none"><defs><linearGradient id="eg33_252" x1="0" y1="0" x2="0" y2="1"><stop offset="0" stop-color="#FFFFFF"/><stop offset="1" stop-color="#DFE3EE"/></linearGradient></defs><rect x="0.5" y="0.5" width="8" height="8" rx="1" fill="url(#eg33_252)" stroke="#8F8F8F"/><path d="M2.5 4.5 H6.5" stroke="#3A3E9A" stroke-width="1" stroke-linecap="butt"/><path d="M4.5 2.5 V6.5" stroke="#3A3E9A" stroke-width="1" stroke-linecap="butt"/></svg>
<svg style="left:50px;top:249px;" width="13" height="11" viewBox="0 0 13 11" fill="none" stroke-linecap="round" stroke-linejoin="round">
<path d="M0 2.4 H5 L6.4 0.3 H12.4 Q13 0.3 13 0.9 V10.4 Q13 11 12.4 11 H0.6 Q0 11 0 10.4 Z" fill="#DCB56E"/>
<path d="M6.8 1.3 H12.2 V2.2 H6.2 Z" fill="#F3DFB3"/></svg>
<svg style="left:33px;top:270px" width="9" height="9" viewBox="0 0 9 9" fill="none"><defs><linearGradient id="eg33_270" x1="0" y1="0" x2="0" y2="1"><stop offset="0" stop-color="#FFFFFF"/><stop offset="1" stop-color="#DFE3EE"/></linearGradient></defs><rect x="0.5" y="0.5" width="8" height="8" rx="1" fill="url(#eg33_270)" stroke="#8F8F8F"/><path d="M2.5 4.5 H6.5" stroke="#3A3E9A" stroke-width="1" stroke-linecap="butt"/><path d="M4.5 2.5 V6.5" stroke="#3A3E9A" stroke-width="1" stroke-linecap="butt"/></svg>
<svg style="left:50px;top:267px;" width="13" height="11" viewBox="0 0 13 11" fill="none" stroke-linecap="round" stroke-linejoin="round">
<path d="M0 2.4 H5 L6.4 0.3 H12.4 Q13 0.3 13 0.9 V10.4 Q13 11 12.4 11 H0.6 Q0 11 0 10.4 Z" fill="#DCB56E"/>
<path d="M6.8 1.3 H12.2 V2.2 H6.2 Z" fill="#F3DFB3"/></svg>
<svg style="left:33px;top:288px" width="9" height="9" viewBox="0 0 9 9" fill="none"><defs><linearGradient id="eg33_288" x1="0" y1="0" x2="0" y2="1"><stop offset="0" stop-color="#FFFFFF"/><stop offset="1" stop-color="#DFE3EE"/></linearGradient></defs><rect x="0.5" y="0.5" width="8" height="8" rx="1" fill="url(#eg33_288)" stroke="#8F8F8F"/><path d="M2.5 4.5 H6.5" stroke="#3A3E9A" stroke-width="1" stroke-linecap="butt"/><path d="M4.5 2.5 V6.5" stroke="#3A3E9A" stroke-width="1" stroke-linecap="butt"/></svg>
<svg style="left:50px;top:285px;" width="13" height="11" viewBox="0 0 13 11" fill="none" stroke-linecap="round" stroke-linejoin="round">
<path d="M0 2.4 H5 L6.4 0.3 H12.4 Q13 0.3 13 0.9 V10.4 Q13 11 12.4 11 H0.6 Q0 11 0 10.4 Z" fill="#DCB56E"/>
<path d="M6.8 1.3 H12.2 V2.2 H6.2 Z" fill="#F3DFB3"/></svg>
<svg style="left:33px;top:306px" width="9" height="9" viewBox="0 0 9 9" fill="none"><defs><linearGradient id="eg33_306" x1="0" y1="0" x2="0" y2="1"><stop offset="0" stop-color="#FFFFFF"/><stop offset="1" stop-color="#DFE3EE"/></linearGradient></defs><rect x="0.5" y="0.5" width="8" height="8" rx="1" fill="url(#eg33_306)" stroke="#8F8F8F"/><path d="M2.5 4.5 H6.5" stroke="#3A3E9A" stroke-width="1" stroke-linecap="butt"/><path d="M4.5 2.5 V6.5" stroke="#3A3E9A" stroke-width="1" stroke-linecap="butt"/></svg>
<svg style="left:50px;top:303px;" width="13" height="11" viewBox="0 0 13 11" fill="none" stroke-linecap="round" stroke-linejoin="round">
<path d="M0 2.4 H5 L6.4 0.3 H12.4 Q13 0.3 13 0.9 V10.4 Q13 11 12.4 11 H0.6 Q0 11 0 10.4 Z" fill="#DCB56E"/>
<path d="M6.8 1.3 H12.2 V2.2 H6.2 Z" fill="#F3DFB3"/></svg>
<svg style="left:50px;top:320px;" width="14" height="15" viewBox="0 0 14 15" fill="none" stroke-linecap="round" stroke-linejoin="round">
<rect x="4.2" y="0.2" width="7.8" height="6.6" fill="#2A2A2A"/>
<path d="M5.6 2.3 H10.6 M5.6 4.5 H10.6" stroke="#fff" stroke-width="1" stroke-linecap="butt"/>
<path d="M0.2 8.2 H5.8 V9.2 L4 11 L5.8 12.8 V13.8 H0.2 V12.8 L2 11 L0.2 9.2 Z" fill="#2A2A2A"/>
<path d="M7.8 8.6 L12.8 13.6 M12.8 8.6 L7.8 13.6" stroke="#E21B1B" stroke-width="2" stroke-linecap="butt"/></svg>
<svg style="left:33px;top:342px" width="9" height="9" viewBox="0 0 9 9" fill="none"><defs><linearGradient id="eg33_342" x1="0" y1="0" x2="0" y2="1"><stop offset="0" stop-color="#FFFFFF"/><stop offset="1" stop-color="#DFE3EE"/></linearGradient></defs><rect x="0.5" y="0.5" width="8" height="8" rx="1" fill="url(#eg33_342)" stroke="#8F8F8F"/><path d="M2.5 4.5 H6.5" stroke="#3A3E9A" stroke-width="1" stroke-linecap="butt"/><path d="M4.5 2.5 V6.5" stroke="#3A3E9A" stroke-width="1" stroke-linecap="butt"/></svg>
<svg style="left:50px;top:338px;" width="13" height="14" viewBox="0 0 13 14" fill="none" stroke-linecap="round" stroke-linejoin="round">
<rect x="1.8" y="0.8" width="10.2" height="11.6" fill="#F0F0F0" stroke="#2A2A2A" stroke-width="1.3" stroke-linejoin="miter"/>
<path d="M0.2 2.4 H1.6 M0.2 4.4 H1.6 M0.2 6.4 H1.6 M0.2 8.4 H1.6 M0.2 10.4 H1.6" stroke="#2A2A2A" stroke-width="0.9" stroke-linecap="butt"/>
<path d="M8 3.2 L5.6 6.6 H7.8 L6.6 9.6" stroke="#2A2A2A" stroke-width="1.1"/></svg>
<div style="left:67px;top:174px;width:57px;height:18px;background:#0A76D6;box-sizing:border-box;border:1px dotted #111;"></div>
<span class="t" style="left:50.6px;top:157.2px;height:16px;line-height:16px;white-space:nowrap;font-size:12px;"><span style="display:inline-block;width:47.20px;transform:scaleX(0.996);transform-origin:0 0">localhost</span></span>
<span class="t" style="left:101.2px;top:157.2px;height:16px;line-height:16px;white-space:nowrap;font-size:12px;"><span style="display:inline-block;width:127.80px;transform:scaleX(0.908);transform-origin:0 0">(SQL&nbsp;Server&nbsp;17.0.1000.7&nbsp;-</span></span>
<span class="t" style="left:233.3px;top:157.2px;height:16px;line-height:16px;white-space:nowrap;font-size:12px;width:113.7px;overflow:hidden;"><span style="display:inline-block;width:137.10px;transform:scaleX(0.965);transform-origin:0 0">WIN2025-1¥Administrator)</span></span>
<span class="t" style="left:68.5px;top:175.4px;height:16px;line-height:16px;white-space:nowrap;font-size:12px;color:#FFFFFF;"><span style="display:inline-block;font-size:13.08px;-webkit-text-stroke:0.25px;width:54.00px;transform:scaleX(0.692);transform-origin:0 0">データベース</span></span>
<span class="t" style="left:87.3px;top:194.0px;height:16px;line-height:16px;white-space:nowrap;font-size:12px;"><span style="display:inline-block;font-size:13.08px;-webkit-text-stroke:0.25px;width:36.98px;transform:scaleX(0.711);transform-origin:0 0">システム</span><span style="display:inline-block;width:3.25px;transform:scaleX(0.973);transform-origin:0 0">&nbsp;</span><span style="display:inline-block;font-size:13.08px;-webkit-text-stroke:0.25px;width:55.47px;transform:scaleX(0.711);transform-origin:0 0">データベース</span></span>
<span class="t" style="left:88.5px;top:212.0px;height:16px;line-height:16px;white-space:nowrap;font-size:12px;"><span style="display:inline-block;font-size:13.08px;-webkit-text-stroke:0.25px;width:54.56px;transform:scaleX(0.699);transform-origin:0 0">データベース</span><span style="display:inline-block;width:3.20px;transform:scaleX(0.957);transform-origin:0 0">&nbsp;</span><span style="display:inline-block;font-size:13.08px;-webkit-text-stroke:0.25px;width:72.74px;transform:scaleX(0.699);transform-origin:0 0">スナップショット</span></span>
<span class="t" style="left:69.0px;top:230.0px;height:16px;line-height:16px;white-space:nowrap;font-size:12px;"><span style="display:inline-block;font-size:13.08px;-webkit-text-stroke:0.25px;width:52.20px;transform:scaleX(0.669);transform-origin:0 0">セキュリティ</span></span>
<span class="t" style="left:68.8px;top:248.0px;height:16px;line-height:16px;white-space:nowrap;font-size:12px;"><span style="display:inline-block;font-size:13.08px;-webkit-text-stroke:0.25px;width:35.63px;transform:scaleX(0.685);transform-origin:0 0">サーバー</span><span style="display:inline-block;width:3.13px;transform:scaleX(0.937);transform-origin:0 0">&nbsp;</span><span style="display:inline-block;font-size:13.08px;-webkit-text-stroke:0.25px;width:53.44px;transform:scaleX(0.685);transform-origin:0 0">オブジェクト</span></span>
<span class="t" style="left:69.3px;top:266.0px;height:16px;line-height:16px;white-space:nowrap;font-size:12px;"><span style="display:inline-block;font-size:13.08px;-webkit-text-stroke:0.25px;width:69.70px;transform:scaleX(0.670);transform-origin:0 0">レプリケーション</span></span>
<span class="t" style="left:68.5px;top:283.4px;height:16px;line-height:16px;white-space:nowrap;font-size:12px;"><span style="display:inline-block;width:58.63px;transform:scaleX(0.966);transform-origin:0 0">Always&nbsp;On&nbsp;</span><span style="display:inline-block;-webkit-text-stroke:0.2px;width:48.87px;transform:scaleX(1.018);transform-origin:0 0">高可用性</span></span>
<span class="t" style="left:69.0px;top:301.2px;height:16px;line-height:16px;white-space:nowrap;font-size:12px;"><span style="display:inline-block;-webkit-text-stroke:0.2px;width:24.50px;transform:scaleX(1.021);transform-origin:0 0">管理</span></span>
<span class="t" style="left:68.5px;top:319.4px;height:16px;line-height:16px;white-space:nowrap;font-size:12px;"><span style="display:inline-block;width:62.24px;transform:scaleX(0.943);transform-origin:0 0">SQL&nbsp;Server&nbsp;</span><span style="display:inline-block;font-size:13.08px;-webkit-text-stroke:0.25px;width:53.76px;transform:scaleX(0.689);transform-origin:0 0">エージェント</span><span style="display:inline-block;width:6.92px;transform:scaleX(0.943);transform-origin:0 0">&nbsp;(</span><span style="display:inline-block;font-size:13.08px;-webkit-text-stroke:0.25px;width:53.76px;transform:scaleX(0.689);transform-origin:0 0">エージェント</span><span style="display:inline-block;width:21.38px;transform:scaleX(0.943);transform-origin:0 0">&nbsp;XP&nbsp;</span><span style="display:inline-block;font-size:13.08px;-webkit-text-stroke:0.25px;width:8.96px;transform:scaleX(0.689);transform-origin:0 0">を</span><span style="display:inline-block;-webkit-text-stroke:0.2px;width:23.84px;transform:scaleX(0.993);transform-origin:0 0">無効</span><span style="display:inline-block;font-size:13.08px;-webkit-text-stroke:0.25px;width:26.88px;transform:scaleX(0.689);transform-origin:0 0">にする</span><span style="display:inline-block;width:3.77px;transform:scaleX(0.943);transform-origin:0 0">)</span></span>
<span class="t" style="left:68.5px;top:337.4px;height:16px;line-height:16px;white-space:nowrap;font-size:12px;"><span style="display:inline-block;width:78.50px;transform:scaleX(0.981);transform-origin:0 0">XEvent&nbsp;Profiler</span></span>
<div style="left:121px;top:188px;width:256px;height:260px;background:#F6FAFD;box-sizing:border-box;border:1px solid #5193DA;"></div>
<div style="left:154px;top:215px;width:221px;height:1px;background:#C9CED4;"></div>
<div style="left:154px;top:287px;width:221px;height:1px;background:#C9CED4;"></div>
<div style="left:154px;top:315px;width:221px;height:1px;background:#C9CED4;"></div>
<div style="left:154px;top:365px;width:221px;height:1px;background:#C9CED4;"></div>
<div style="left:154px;top:393px;width:221px;height:1px;background:#C9CED4;"></div>
<div style="left:154px;top:421px;width:221px;height:1px;background:#C9CED4;"></div>
<svg style="left:360px;top:297px;" width="6" height="8" viewBox="0 0 6 8" fill="none" stroke-linecap="round" stroke-linejoin="round"><path d="M0.8 0.6 L5 4 L0.8 7.4 Z" fill="#1A1A1A"/></svg>
<svg style="left:360px;top:403px;" width="6" height="8" viewBox="0 0 6 8" fill="none" stroke-linecap="round" stroke-linejoin="round"><path d="M0.8 0.6 L5 4 L0.8 7.4 Z" fill="#1A1A1A"/></svg>
<span class="t" style="left:157.3px;top:193.0px;height:16px;line-height:16px;white-space:nowrap;font-size:12px;"><span style="display:inline-block;-webkit-text-stroke:0.2px;width:11.89px;transform:scaleX(0.991);transform-origin:0 0">新</span><span style="display:inline-block;font-size:13.08px;-webkit-text-stroke:0.25px;width:71.52px;transform:scaleX(0.688);transform-origin:0 0">しいデータベース</span><span style="display:inline-block;width:25.09px;transform:scaleX(0.941);transform-origin:0 0">(N)...</span></span>
<span class="t" style="left:157.3px;top:221.0px;height:16px;line-height:16px;white-space:nowrap;font-size:12px;"><span style="display:inline-block;font-size:13.08px;-webkit-text-stroke:0.25px;width:35.04px;transform:scaleX(0.674);transform-origin:0 0">アタッチ</span><span style="display:inline-block;width:23.96px;transform:scaleX(0.922);transform-origin:0 0">(A)...</span></span>
<span class="t" style="left:157.3px;top:243.0px;height:16px;line-height:16px;white-space:nowrap;font-size:12px;"><span style="display:inline-block;font-size:13.08px;-webkit-text-stroke:0.25px;width:61.71px;transform:scaleX(0.678);transform-origin:0 0">データベースの</span><span style="display:inline-block;-webkit-text-stroke:0.2px;width:23.45px;transform:scaleX(0.977);transform-origin:0 0">復元</span><span style="display:inline-block;width:24.74px;transform:scaleX(0.927);transform-origin:0 0">(R)...</span></span>
<span class="t" style="left:157.3px;top:265.0px;height:16px;line-height:16px;white-space:nowrap;font-size:12px;"><span style="display:inline-block;width:21.08px;transform:scaleX(0.930);transform-origin:0 0">File&nbsp;</span><span style="display:inline-block;font-size:13.08px;-webkit-text-stroke:0.25px;width:61.85px;transform:scaleX(0.680);transform-origin:0 0">およびファイル</span><span style="display:inline-block;width:3.11px;transform:scaleX(0.930);transform-origin:0 0">&nbsp;</span><span style="display:inline-block;font-size:13.08px;-webkit-text-stroke:0.25px;width:44.18px;transform:scaleX(0.680);transform-origin:0 0">グループの</span><span style="display:inline-block;-webkit-text-stroke:0.2px;width:23.51px;transform:scaleX(0.980);transform-origin:0 0">復元</span><span style="display:inline-block;width:24.17px;transform:scaleX(0.930);transform-origin:0 0">(E)...</span></span>
<span class="t" style="left:157.3px;top:293.0px;height:16px;line-height:16px;white-space:nowrap;font-size:12px;"><span style="display:inline-block;font-size:13.08px;-webkit-text-stroke:0.25px;width:41.28px;transform:scaleX(0.635);transform-origin:0 0">フィルター</span><span style="display:inline-block;width:13.32px;transform:scaleX(0.869);transform-origin:0 0">(T)</span></span>
<span class="t" style="left:157.3px;top:321.0px;height:16px;line-height:16px;white-space:nowrap;font-size:12px;"><span style="display:inline-block;font-size:13.08px;-webkit-text-stroke:0.25px;width:26.26px;transform:scaleX(0.673);transform-origin:0 0">データ</span><span style="display:inline-block;-webkit-text-stroke:0.2px;width:11.65px;transform:scaleX(0.970);transform-origin:0 0">層</span><span style="display:inline-block;font-size:13.08px;-webkit-text-stroke:0.25px;width:78.78px;transform:scaleX(0.673);transform-origin:0 0">アプリケーションの</span><span style="display:inline-block;-webkit-text-stroke:0.2px;width:23.29px;transform:scaleX(0.970);transform-origin:0 0">配置</span><span style="display:inline-block;width:22.72px;transform:scaleX(0.921);transform-origin:0 0">(L)...</span></span>
<span class="t" style="left:157.3px;top:343.0px;height:16px;line-height:16px;white-space:nowrap;font-size:12px;"><span style="display:inline-block;font-size:13.08px;-webkit-text-stroke:0.25px;width:26.14px;transform:scaleX(0.670);transform-origin:0 0">データ</span><span style="display:inline-block;-webkit-text-stroke:0.2px;width:11.59px;transform:scaleX(0.966);transform-origin:0 0">層</span><span style="display:inline-block;font-size:13.08px;-webkit-text-stroke:0.25px;width:122.01px;transform:scaleX(0.670);transform-origin:0 0">アプリケーションのインポート</span><span style="display:inline-block;width:19.55px;transform:scaleX(0.917);transform-origin:0 0">(I)...</span></span>
<span class="t" style="left:157.3px;top:371.0px;height:16px;line-height:16px;white-space:nowrap;font-size:12px;"><span style="display:inline-block;width:61.37px;transform:scaleX(0.958);transform-origin:0 0">PowerShell&nbsp;</span><span style="display:inline-block;font-size:13.08px;-webkit-text-stroke:0.25px;width:9.11px;transform:scaleX(0.701);transform-origin:0 0">の</span><span style="display:inline-block;-webkit-text-stroke:0.2px;width:24.24px;transform:scaleX(1.010);transform-origin:0 0">起動</span><span style="display:inline-block;width:15.98px;transform:scaleX(0.958);transform-origin:0 0">(H)</span></span>
<span class="t" style="left:157.3px;top:399.0px;height:16px;line-height:16px;white-space:nowrap;font-size:12px;"><span style="display:inline-block;font-size:13.08px;-webkit-text-stroke:0.25px;width:34.56px;transform:scaleX(0.665);transform-origin:0 0">レポート</span><span style="display:inline-block;width:14.54px;transform:scaleX(0.909);transform-origin:0 0">(P)</span></span>
<span class="t" style="left:157.3px;top:427.0px;height:16px;line-height:16px;white-space:nowrap;font-size:12px;"><span style="display:inline-block;-webkit-text-stroke:0.2px;width:23.89px;transform:scaleX(0.995);transform-origin:0 0">最新</span><span style="display:inline-block;font-size:13.08px;-webkit-text-stroke:0.25px;width:8.98px;transform:scaleX(0.691);transform-origin:0 0">の</span><span style="display:inline-block;-webkit-text-stroke:0.2px;width:23.89px;transform:scaleX(0.995);transform-origin:0 0">情報</span><span style="display:inline-block;font-size:13.08px;-webkit-text-stroke:0.25px;width:8.98px;transform:scaleX(0.691);transform-origin:0 0">に</span><span style="display:inline-block;-webkit-text-stroke:0.2px;width:23.89px;transform:scaleX(0.995);transform-origin:0 0">更新</span><span style="display:inline-block;width:14.48px;transform:scaleX(0.945);transform-origin:0 0">(F)</span></span>
</div></body></html>
